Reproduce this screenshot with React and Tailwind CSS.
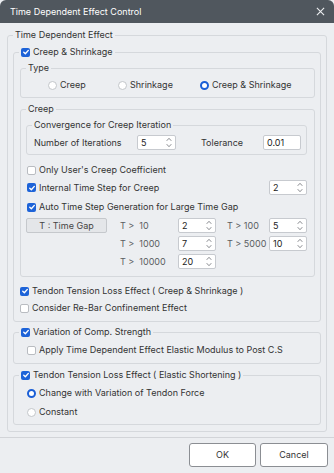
import React from "react";

/* Time Dependent Effect Control dialog */

function Check({ on }) {
  return on ? (
    <span className="flex h-[9px] w-[9px] shrink-0 items-center justify-center rounded-[2px] bg-[#1d63d8]">
      <svg viewBox="0 0 10 10" className="h-[8px] w-[8px]">
        <path d="M2.2 5.3 4.2 7.2 7.9 3" fill="none" stroke="#fff" strokeWidth="1.7" strokeLinecap="round" strokeLinejoin="round" />
      </svg>
    </span>
  ) : (
    <span className="h-[9px] w-[9px] shrink-0 rounded-[2px] border border-[#b9bcc1] bg-white" />
  );
}

function Radio({ on }) {
  return on ? (
    <span className="h-[9px] w-[9px] shrink-0 rounded-full border-[2.5px] border-[#1b5fd6] bg-white" />
  ) : (
    <span className="h-[9px] w-[9px] shrink-0 rounded-full border border-[#c3c6ca] bg-white" />
  );
}

function Spin({ value, w = "w-[38px]" }) {
  return (
    <div className={`flex h-[15px] ${w} shrink-0 items-center justify-between rounded-[2px] border border-[#c7cacf] bg-white pl-[3px] pr-[3px]`}>
      <span className="leading-none text-[#222]">{value}</span>
      <svg viewBox="0 0 6 11" className="h-[11px] w-[6px]">
        <path d="M0.7 3.8 3 1.3 5.3 3.8M0.7 7.2 3 9.7 5.3 7.2" fill="none" stroke="#7a7d82" strokeWidth="0.9" />
      </svg>
    </div>
  );
}

function Group({ legend, className = "", children }) {
  return (
    <fieldset className={`rounded-[3px] border border-[#d5d8dc] ${className}`}>
      <legend className="ml-[5px] flex items-center gap-[3px] px-[2px] leading-[12px]">{legend}</legend>
      {children}
    </fieldset>
  );
}

function Row({ on, label, className = "" }) {
  return (
    <div className={`flex h-[12px] items-center gap-[3px] ${className}`}>
      <Check on={on} />
      <span>{label}</span>
    </div>
  );
}

function RadioRow({ on, label, className = "" }) {
  return (
    <div className={`flex h-[12px] items-center gap-[3px] ${className}`}>
      <Radio on={on} />
      <span>{label}</span>
    </div>
  );
}

const gaps = [
  ["T >  10", "2", "T > 100", "5"],
  ["T >  1000", "7", "T > 5000", "10"],
  ["T >  10000", "20"],
];

export default function App() {
  return (
    <div className="flex h-[473px] w-[334px] flex-col overflow-hidden bg-[#eceef1] font-['Inter',sans-serif] text-[9px] text-[#333]">
      {/* Title bar */}
      <div className="flex h-[23px] shrink-0 items-center justify-between rounded-t-[6px] bg-[#50575e] pl-[10px] pr-[9px] text-white">
        <span>Time Dependent Effect Control</span>
        <svg viewBox="0 0 10 10" className="h-[9px] w-[9px]">
          <path d="M1 1 9 9M9 1 1 9" stroke="#eef0f2" strokeWidth="1.2" />
        </svg>
      </div>

      {/* Body */}
      <div className="flex-1 px-[7px] pt-[6px]">
        <Group legend="Time Dependent Effect">
          <div className="px-[5px] pb-[6px] pt-[5px]">
            <Group legend={<><Check on /><span>Creep &amp; Shrinkage</span></>}>
              <div className="pb-[7px] pl-[6px] pr-[5px] pt-[4px]">
                <Group legend="Type">
                  <div className="flex pb-[6px] pl-[27px] pt-[5px]">
                    <RadioRow on={false} label="Creep" className="w-[70px]" />
                    <RadioRow on={false} label="Shrinkage" className="w-[82px]" />
                    <RadioRow on label="Creep & Shrinkage" />
                  </div>
                </Group>

                <Group legend="Creep" className="mt-[5px]">
                  <div className="pb-[7px] pl-[5px] pr-[7px] pt-[4px]">
                    <Group legend="Convergence for Creep Iteration">
                      <div className="flex items-center pb-[4px] pl-[7px] pr-[5px] pt-[4px]">
                        <span className="w-[103px]">Number of Iterations</span>
                        <Spin value="5" w="w-[39px]" />
                        <span className="ml-[25px] flex-1">Tolerance</span>
                        <div className="flex h-[15px] w-[38px] items-center rounded-[2px] border border-[#c7cacf] bg-white pl-[3px] text-[#222]">0.01</div>
                      </div>
                    </Group>

                    <Row on={false} label="Only User's Creep Coefficient" className="ml-[1px] mt-[9px]" />
                    <div className="mt-[4px] flex items-center justify-between">
                      <Row on label="Internal Time Step for Creep" className="ml-[1px]" />
                      <Spin value="2" />
                    </div>
                    <Row on label="Auto Time Step Generation for Large Time Gap" className="ml-[1px] mt-[6px]" />

                    <div className="mt-[5px] flex items-start">
                      <div className="flex h-[15px] w-[81px] items-center justify-center rounded-[2px] border border-[#c5c8cc] bg-[#e4e6e9] text-[#444]">
                        T : Time Gap
                      </div>
                      <div className="ml-[13px] flex flex-col gap-[3px]">
                        {gaps.map((g) => (
                          <div key={g[0]} className="flex items-center text-[#5a5d62]">
                            <span className="w-[58px] whitespace-pre">{g[0]}</span>
                            <Spin value={g[1]} />
                            {g[2] && (
                              <>
                                <span className="ml-[11px] w-[42px]">{g[2]}</span>
                                <Spin value={g[3]} />
                              </>
                            )}
                          </div>
                        ))}
                      </div>
                    </div>
                  </div>
                </Group>

                <Row on label="Tendon Tension Loss Effect ( Creep & Shrinkage )" className="mt-[8px]" />
                <Row on={false} label="Consider Re-Bar Confinement Effect" className="mt-[5px]" />
              </div>
            </Group>

            <Group legend={<><Check on /><span>Variation of Comp. Strength</span></>} className="mt-[4px]">
              <div className="pb-[7px] pl-[13px] pt-[6px]">
                <Row on={false} label="Apply Time Dependent Effect Elastic Modulus to Post C.S" />
              </div>
            </Group>

            <Group legend={<><Check on /><span>Tendon Tension Loss Effect ( Elastic Shortening )</span></>} className="mt-[5px]">
              <div className="flex flex-col gap-[7px] pb-[6px] pl-[13px] pt-[6px]">
                <RadioRow on label="Change with Variation of Tendon Force" />
                <RadioRow on={false} label="Constant" />
              </div>
            </Group>
          </div>
        </Group>
      </div>

      {/* Footer */}
      <div className="flex shrink-0 justify-end gap-[4px] border-t border-[#d2d4d8] pb-[6px] pr-[6px] pt-[5px]">
        <button className="h-[24px] w-[67px] rounded-[3px] border border-[#8b8e93] bg-white text-[#333]">OK</button>
        <button className="h-[24px] w-[68px] rounded-[3px] border border-[#8b8e93] bg-white text-[#333]">Cancel</button>
      </div>
    </div>
  );
}
